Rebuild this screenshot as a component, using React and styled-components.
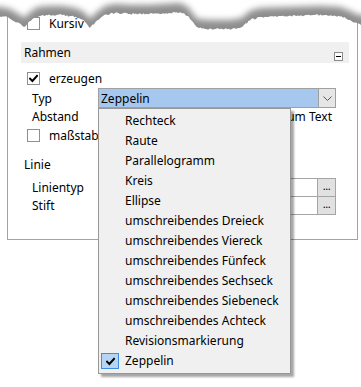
import React from "react";
import styled, { createGlobalStyle } from "styled-components";

const TYPES = [
  "Rechteck",
  "Raute",
  "Parallelogramm",
  "Kreis",
  "Ellipse",
  "umschreibendes Dreieck",
  "umschreibendes Viereck",
  "umschreibendes Fünfeck",
  "umschreibendes Sechseck",
  "umschreibendes Siebeneck",
  "umschreibendes Achteck",
  "Revisionsmarkierung",
  "Zeppelin",
];

const TEAR = [
  [-20, 16], [0, 16], [10, 18], [20, 24], [25, 27], [30, 21], [38, 16], [50, 15],
  [62, 15], [75, 17], [84, 21], [90, 28], [96, 22], [105, 15], [115, 13],
  [130, 14], [150, 14], [165, 13], [180, 12], [188, 16], [197, 28], [210, 29],
  [230, 29], [242, 27], [250, 20], [260, 17], [290, 16], [320, 15], [340, 16],
  [350, 20], [358, 24], [381, 26],
];

const tearAt = (x) => {
  for (let i = 1; i < TEAR.length; i++) {
    const [x1, y1] = TEAR[i];
    const [x0, y0] = TEAR[i - 1];
    if (x <= x1) return y0 + ((y1 - y0) * (x - x0)) / (x1 - x0);
  }
  return TEAR[TEAR.length - 1][1];
};

const jitter = (x) => {
  const v = Math.sin(x * 12.9898) * 43758.5453;
  return (v - Math.floor(v) - 0.5) * 1.8;
};

const tearPath = (shift, rough) => {
  let d = "M-20,-40 L-20," + (tearAt(-20) - shift);
  for (let x = -20; x <= 381; x += 1.5) {
    const y = tearAt(x) - shift + (rough ? jitter(x) : 0);
    d += ` L${x.toFixed(1)},${y.toFixed(1)}`;
  }
  return d + " L381,-40 Z";
};

const GlobalStyle = createGlobalStyle`
  body {
    margin: 0;
    background: #ffffff;
  }
`;

function TornEdge() {
  return (
    <StyledTear width="361" height="40" viewBox="0 0 361 40">
      <defs>
        <filter
          id="fade"
          filterUnits="userSpaceOnUse"
          x="-60"
          y="-60"
          width="500"
          height="140"
        >
          <feGaussianBlur stdDeviation="3" />
        </filter>
      </defs>
      <path d={tearPath(0, true)} fill="#8e8e8e" />
      <path d={tearPath(9, false)} fill="#ffffff" filter="url(#fade)" />
    </StyledTear>
  );
}

function CheckMark({ size = 9 }) {
  return (
    <svg width={size} height={size} viewBox="0 0 9 9">
      <path
        d="M1 4.6 L3.4 7 L8 1.8"
        fill="none"
        stroke="#000"
        strokeWidth="2"
        strokeLinecap="square"
      />
    </svg>
  );
}

function Checkbox({ checked }) {
  return <StyledCheckbox>{checked && <CheckMark />}</StyledCheckbox>;
}

function App() {
  return (
    <>
      <GlobalStyle />
      <StyledPage>
        <StyledPanel>
          <StyledCheckRow $top={17}>
            <Checkbox />
            <span>Kursiv</span>
          </StyledCheckRow>

          <StyledGroupHeader>
            <span>Rahmen</span>
            <StyledCollapse />
          </StyledGroupHeader>

          <StyledCheckRow $top={9}>
            <Checkbox checked />
            <span>erzeugen</span>
          </StyledCheckRow>

          <StyledFieldRow $top={3} $height={20}>
            <StyledLabel>Typ</StyledLabel>
            <StyledCombo>
              <StyledComboValue>Zeppelin</StyledComboValue>
              <StyledComboButton>
                <svg width="9" height="5" viewBox="0 0 9 5">
                  <path d="M0.5 0.5 L4.5 4.5 L8.5 0.5" fill="none" stroke="#555" />
                </svg>
              </StyledComboButton>
            </StyledCombo>
          </StyledFieldRow>

          <StyledFieldRow $top={0} $height={17}>
            <StyledLabel>Abstand</StyledLabel>
            <StyledTrailing>zum Text</StyledTrailing>
          </StyledFieldRow>

          <StyledCheckRow $top={4}>
            <Checkbox />
            <span>maßstab:</span>
          </StyledCheckRow>

          <StyledSubTitle>Linie</StyledSubTitle>

          <StyledInputRows>
            <StyledFieldRow $top={0} $height={19}>
              <StyledLabel>Linientyp</StyledLabel>
              <StyledInput />
              <StyledEllipsis>...</StyledEllipsis>
            </StyledFieldRow>
            <StyledFieldRow $top={0} $height={19}>
              <StyledLabel>Stift</StyledLabel>
              <StyledInput />
              <StyledEllipsis>...</StyledEllipsis>
            </StyledFieldRow>
          </StyledInputRows>
        </StyledPanel>

        <StyledMenu>
          {TYPES.map((type) => (
            <StyledMenuItem key={type}>
              {type === "Zeppelin" && (
                <StyledMenuCheck>
                  <CheckMark />
                </StyledMenuCheck>
              )}
              {type}
            </StyledMenuItem>
          ))}
        </StyledMenu>

        <TornEdge />
      </StyledPage>
    </>
  );
}

export default App;

const StyledPage = styled.div`
  position: relative;
  width: 361px;
  height: 387px;
  overflow: hidden;
  background: #ffffff;
  font-family: "Noto Sans", "Open Sans", sans-serif;
  font-size: 12px;
  color: #000000;
`;

const StyledTear = styled.svg`
  position: absolute;
  left: 0;
  top: 0;
  pointer-events: none;
`;

const StyledPanel = styled.div`
  box-sizing: border-box;
  width: 351px;
  height: 240px;
  margin-left: 7px;
  border: 1px solid #a3a3a3;
  border-top: none;
  display: flex;
  flex-direction: column;
`;

const StyledCheckRow = styled.div`
  display: flex;
  align-items: center;
  gap: 9px;
  height: 13px;
  margin: ${({ $top }) => $top}px 0 0 19px;
  white-space: nowrap;
`;

const StyledCheckbox = styled.div`
  box-sizing: border-box;
  width: 13px;
  height: 13px;
  flex-shrink: 0;
  border: 1px solid #8f8f8f;
  background: #ffffff;
  display: flex;
  align-items: center;
  justify-content: center;
`;

const StyledGroupHeader = styled.div`
  display: flex;
  justify-content: space-between;
  align-items: center;
  height: 21px;
  margin: 12px 8px 0 13px;
  padding: 0 6px 0 3px;
  background: #f0f0f0;
`;

const StyledCollapse = styled.div`
  position: relative;
  box-sizing: border-box;
  width: 9px;
  height: 9px;
  align-self: flex-end;
  margin-bottom: 2px;
  border: 1px solid #8a8a8a;
  background: #ffffff;

  &::after {
    content: "";
    position: absolute;
    left: 1px;
    right: 1px;
    top: 3px;
    height: 1px;
    background: #000000;
  }
`;

const StyledFieldRow = styled.div`
  display: flex;
  align-items: center;
  height: ${({ $height }) => $height}px;
  margin: ${({ $top }) => $top}px 21px 0 24px;
`;

const StyledLabel = styled.span`
  width: 66px;
  flex-shrink: 0;
`;

const StyledCombo = styled.div`
  box-sizing: border-box;
  flex: 1;
  height: 100%;
  display: flex;
  border: 1px solid #a0a0a0;
  background: #a7c8ee;
`;

const StyledComboValue = styled.div`
  flex: 1;
  display: flex;
  align-items: center;
  padding-left: 2px;
`;

const StyledComboButton = styled.div`
  width: 16px;
  display: flex;
  align-items: center;
  justify-content: center;
  border-left: 1px solid #a0a0a0;
  background: #e6e6e6;
`;

const StyledTrailing = styled.span`
  margin-left: auto;
  margin-right: 4px;
`;

const StyledSubTitle = styled.div`
  margin: 14px 0 0 16px;
  height: 17px;
  line-height: 17px;
`;

const StyledInputRows = styled.div`
  display: flex;
  flex-direction: column;
  margin-top: 5px;

  & > div + div {
    margin-top: -1px;
  }
`;

const StyledInput = styled.div`
  box-sizing: border-box;
  flex: 1;
  height: 100%;
  border: 1px solid #a5a5a5;
  background: #ffffff;
`;

const StyledEllipsis = styled.div`
  box-sizing: border-box;
  width: 19px;
  height: 100%;
  margin-left: -1px;
  border: 1px solid #a5a5a5;
  background: #e1e1e1;
  font-size: 11px;
  line-height: 14px;
  text-align: center;
  letter-spacing: -0.5px;
`;

const StyledMenu = styled.div`
  position: absolute;
  left: 98px;
  top: 108px;
  box-sizing: border-box;
  width: 193px;
  padding: 2px 0;
  border: 1px solid #979797;
  background: #f0f0f0;
  box-shadow: 3px 3px 2px rgba(0, 0, 0, 0.35);
`;

const StyledMenuItem = styled.div`
  position: relative;
  height: 20px;
  line-height: 20px;
  padding-left: 26px;
  white-space: nowrap;
`;

const StyledMenuCheck = styled.div`
  position: absolute;
  left: 2px;
  top: 2px;
  box-sizing: border-box;
  width: 18px;
  height: 16px;
  border: 1px solid #3d8ee0;
  background: #b5d5f3;
  display: flex;
  align-items: center;
  justify-content: center;
`;
